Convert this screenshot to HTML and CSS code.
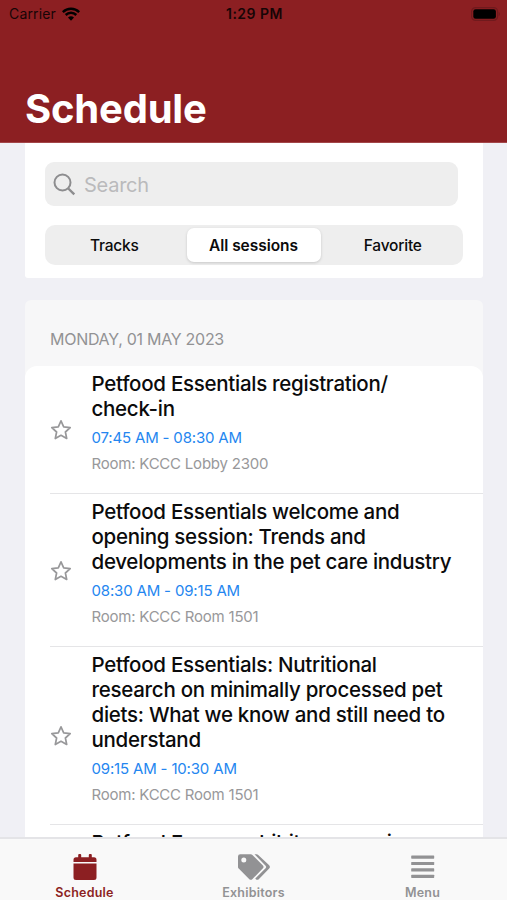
FILE: index.html
```html
<!DOCTYPE html>
<html lang="en">
<head>
<meta charset="utf-8">
<title>Schedule</title>
<link rel="stylesheet" href="styles.css">
</head>
<body>
<svg class="defs" width="0" height="0" aria-hidden="true">
  <symbol id="star" viewBox="0 0 22 22">
    <path d="M11 1.9l2.7 6 6.5.7-4.8 4.4 1.3 6.5-5.700-3.200-5.700 3.200 1.300-6.500L1.800 8.600l6.500-.7z" fill="none" stroke="#98989a" stroke-width="1.700" stroke-linejoin="round"/>
  </symbol>
</svg>
<div class="app">
  <header class="header">
    <div class="status">
      <div class="carrier"><span>Carrier</span>
        <svg width="18" height="14" viewBox="0 0 18 14" fill="none" stroke="#000" stroke-width="2.5"><path d="M.8 5.100a11.600 11.600 0 0 1 16.400 0M3.700 8a7.500 7.500 0 0 1 10.600 0"/><path d="M9 13.700L6 10.600a4.300 4.300 0 0 1 6 0z" fill="#000" stroke="none"/></svg>
      </div>
      <div class="clock">1:29 PM</div>
      <svg class="battery" width="30" height="14" viewBox="0 0 30 14"><rect x="1.600" y=".6" width="26" height="12.800" rx="4" fill="none" stroke="#701a1d" stroke-width="1.200"/><rect x="3.300" y="2.300" width="22.600" height="9.400" rx="2.300"/><path d="M28.700 5v4c1.500-.6 1.500-3.400 0-4z" fill="#701a1d"/></svg>
    </div>
    <h1>Schedule</h1>
  </header>
  <main class="content">
    <section class="filters">
      <div class="search">
        <svg width="24" height="24" viewBox="0 0 24 24" fill="none" stroke="#8d8d8f" stroke-width="2"><circle cx="9.500" cy="9.500" r="8"/><path d="M15.300 15.500l6 5.800" stroke-width="2.400"/></svg>
        <span>Search</span>
      </div>
      <div class="segments">
        <div class="segment first">Tracks</div>
        <div class="segment selected">All sessions</div>
        <div class="segment last">Favorite</div>
      </div>
    </section>
    <section class="day">
      <h2>MONDAY, 01 MAY 2023</h2>
      <div class="list">
        <article class="session">
          <svg class="star"><use href="#star"/></svg>
          <div class="info"><h3>Petfood Essentials registration/<br>check-in</h3><div class="time">07:45 AM - 08:30 AM</div><div class="room">Room: KCCC Lobby 2300</div></div>
        </article>
        <article class="session">
          <svg class="star"><use href="#star"/></svg>
          <div class="info"><h3>Petfood Essentials welcome and<br>opening session: Trends and<br>developments in the pet care industry</h3><div class="time">08:30 AM - 09:15 AM</div><div class="room">Room: KCCC Room 1501</div></div>
        </article>
        <article class="session">
          <svg class="star"><use href="#star"/></svg>
          <div class="info"><h3>Petfood Essentials: Nutritional<br>research on minimally processed pet<br>diets: What we know and still need to<br>understand</h3><div class="time">09:15 AM - 10:30 AM</div><div class="room">Room: KCCC Room 1501</div></div>
        </article>
        <article class="session">
          <div class="star"></div>
          <div class="info"><h3>Petfood Forum exhibitor move-in</h3></div>
        </article>
      </div>
    </section>
  </main>
  <nav class="tabs">
    <div class="tab active">
      <svg width="24" height="28" viewBox="0 0 24 28" fill="currentColor"><path d="M.5 8V5.700A2.500 2.500 0 0 1 3 3.200h2.200V1a1 1 0 0 1 1-1h1a1 1 0 0 1 1 1v2.200h7.600V1a1 1 0 0 1 1-1h1a1 1 0 0 1 1 1v2.200H21a2.500 2.500 0 0 1 2.500 2.500V8zM.5 9.500h23V23.500A2.500 2.500 0 0 1 21 26H3a2.500 2.500 0 0 1-2.500-2.500z"/></svg>
      <span>Schedule</span>
    </div>
    <div class="tab">
      <svg width="34" height="28" viewBox="0 0 34 28" fill="currentColor"><path fill-rule="evenodd" d="M1 2.500A2.300 2.300 0 0 1 3.300.2h10.400c.7 0 1.300.2 1.700.7l10.300 10.300a2.400 2.400 0 0 1 0 3.400l-10.200 10.300a2.400 2.400 0 0 1-3.400 0L1.700 14.600c-.5-.5-.7-1-.7-1.700zm5.800 1.100a2.500 2.500 0 1 0 0 5 2.500 2.500 0 0 0 0-5z"/><path d="M17.500.2h2c.7 0 1.300.2 1.700.7l11 10.300a2.400 2.400 0 0 1 0 3.400L22 24.900a2.400 2.400 0 0 1-3.400 0l-.3-.4 10.300-10.300a1.700 1.700 0 0 0 0-2.500z"/></svg>
      <span>Exhibitors</span>
    </div>
    <div class="tab">
      <svg width="24" height="28" viewBox="0 0 24 28" fill="currentColor"><rect x=".2" y="1.500" width="23" height="3.200" rx=".6"/><rect x=".2" y="7.900" width="23" height="3.200" rx=".6"/><rect x=".2" y="14.300" width="23" height="3.200" rx=".6"/><rect x=".2" y="20.700" width="23" height="3.200" rx=".6"/></svg>
      <span>Menu</span>
    </div>
  </nav>
</div>
</body>
</html>
```
FILE: styles.css
```css
* { box-sizing: border-box; }
body { margin: 0; font-family: Inter, Roboto, sans-serif; color: #0b0b0c; }
h1, h2, h3 { margin: 0; font-weight: 400; }
svg { flex: none; display: block; }
.defs { position: absolute; }
.app { height: 900px; display: flex; flex-direction: column; overflow: hidden; background: #f0f0f5; }

.header { height: 143px; flex: none; background: #8c1f22; border-bottom: 1px solid #a34649; }
.status { height: 27px; padding: 0 7px 0 9px; display: grid; grid-template-columns: 1fr auto 1fr; align-items: center; color: #170506; }
.carrier { display: flex; align-items: center; gap: 6px; font-size: 14px; letter-spacing: .15px; }
.clock { font-size: 14px; font-weight: 600; letter-spacing: .5px; }
.battery { justify-self: end; }
.header h1 { padding-left: 25px; margin-top: 57px; font-size: 40px; line-height: 50px; font-weight: 700; letter-spacing: -.2px; color: #fff; }

.content { flex: 1; min-height: 0; overflow: hidden; padding: 0 24px 0 25px; }
.filters { height: 135px; background: #fff; padding: 19px 20px 0; border-radius: 0 0 3px 3px; }
.search { height: 44px; margin-right: 5px; padding: 1px 0 0 8px; display: flex; align-items: center; gap: 7px; border-radius: 9px; background: #eeeeee; color: #bababc; font-size: 20px; letter-spacing: -.25px; }
.segments { height: 40px; margin-top: 19px; padding: 3px 3px 3px 2px; display: grid; grid-template-columns: 139.500px 134px 1fr; border-radius: 10px; background: #eeeeee; }
.segment { display: flex; align-items: center; justify-content: center; font-size: 15.500px; font-weight: 500; letter-spacing: -.2px; }
.segment.first { padding-right: 5px; }
.segment.last { padding-left: 5px; }
.segment.selected { background: #fff; border-radius: 7px; font-weight: 600; letter-spacing: -.05px; box-shadow: 0 1px 3px rgba(0, 0, 0, .16); }

.day { margin-top: 22px; background: #f7f7f8; border-radius: 6px 6px 0 0; }
.day h2 { height: 66px; padding: 28px 0 0 25px; font-size: 16px; line-height: 23px; letter-spacing: -.28px; color: #929294; }
.list { background: #fff; border-radius: 12px 12px 0 0; }
.session { margin-left: 25px; display: flex; align-items: center; border-bottom: 1px solid #e5e5e7; }
.star { width: 22px; height: 22px; margin: 1px 19.500px 0 0; flex: none; }
.info { padding: 5px 0 16px; white-space: nowrap; }
.info h3 { font-size: 20.500px; line-height: 25px; font-weight: 450; letter-spacing: -.28px; }
.time { margin-top: 4px; font-size: 15px; line-height: 26px; letter-spacing: -.17px; color: #2486f0; }
.room { font-size: 15px; line-height: 26px; letter-spacing: -.22px; color: #98989a; }

.tabs { height: 63px; flex: none; display: grid; grid-template-columns: repeat(3, 1fr); background: #f9f9f9; border-top: 2px solid #e4e4e7; }
.tab { display: flex; flex-direction: column; align-items: center; padding-top: 15px; gap: 3px; color: #929294; font-size: 12.500px; font-weight: 600; line-height: 16px; letter-spacing: .22px; }
.tab.active { color: #8c1f22; }
```
